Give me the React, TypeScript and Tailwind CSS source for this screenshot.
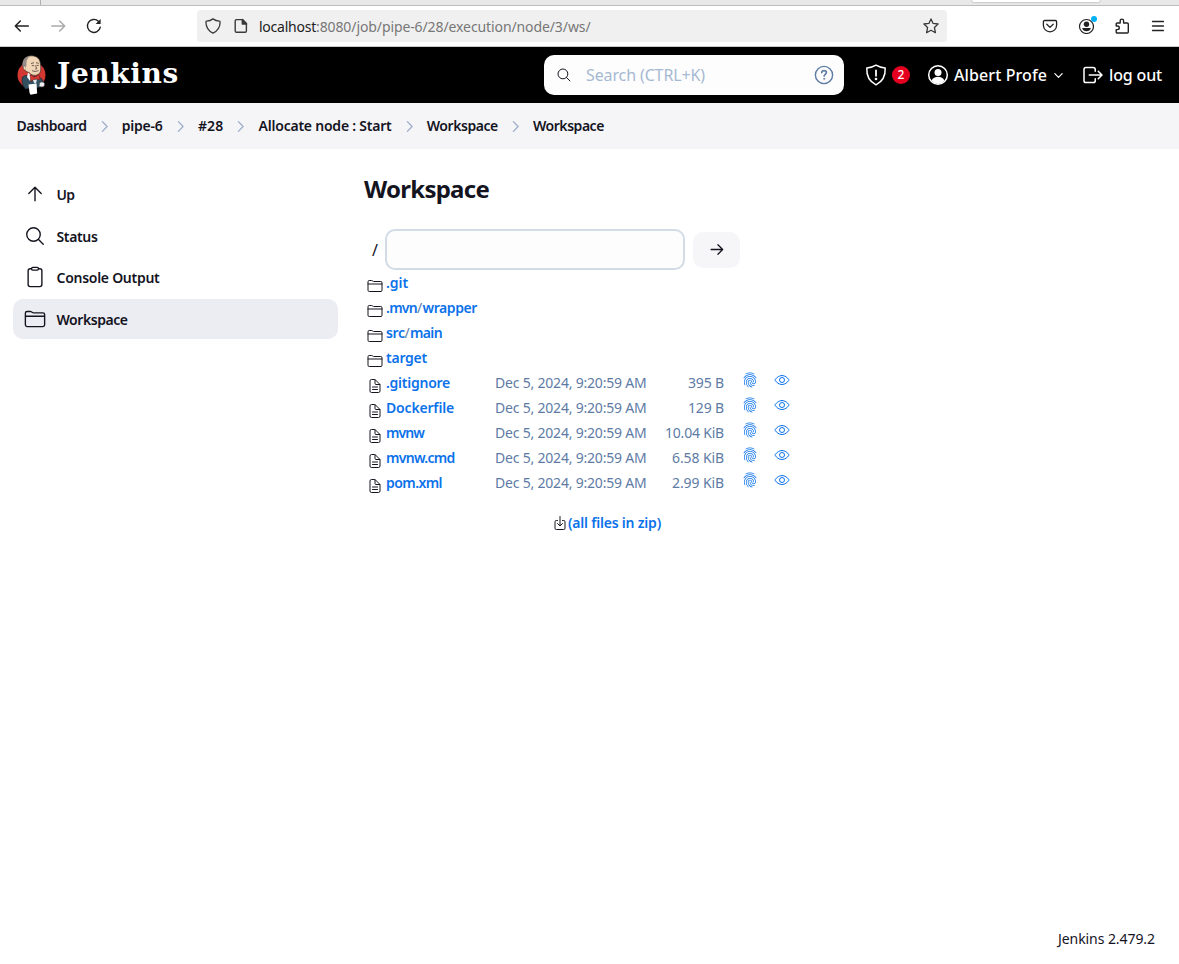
import { useLayoutEffect, useRef, useState } from 'react';
import type { ReactNode } from 'react';
import {
  IoClipboardOutline,
  IoDocumentTextOutline,
  IoDownloadOutline,
  IoEyeOutline,
  IoFingerPrintOutline,
  IoFolderOutline,
  IoSearchOutline,
  IoLogOutOutline,
} from 'react-icons/io5';

/** A single line of text whose letter spacing is adjusted to fill the given width. */
function Fit({ w, children, className = '' }: { w: number; children: string; className?: string }) {
  const ref = useRef<HTMLSpanElement>(null);
  const [spacing, setSpacing] = useState(0);
  useLayoutEffect(() => {
    const el = ref.current;
    if (!el) return;
    const natural = el.getBoundingClientRect().width;
    setSpacing((w - natural) / children.length);
  }, [w, children]);
  return (
    <span ref={ref} className={`inline-block whitespace-pre ${className}`} style={{ letterSpacing: spacing }}>
      {children}
    </span>
  );
}

function Outline({ d, className, strokeWidth = 32 }: { d: string; className: string; strokeWidth?: number }) {
  return (
    <svg className={className} viewBox="0 0 512 512" fill="none" stroke="currentColor" strokeWidth={strokeWidth} strokeLinecap="round" strokeLinejoin="round">
      <path d={d} />
    </svg>
  );
}

function BrowserBar() {
  return (
    <div>
      <div className="flex h-[6px] border-b border-[#bdbdbd] bg-[#e8e8e8]">
        <div className="h-[5px] w-[41px] border-r border-[#b0b0b0]" />
        <div className="ml-[931px] h-[2px] w-[128px] rounded-b bg-white shadow-[0_0_2px_#888]" />
      </div>
      <div className="flex h-[41px] items-center border-b border-[#cccccc] bg-white text-[#222]">
        <svg className="ml-[14px] h-4 w-4" viewBox="0 0 16 16" fill="none" stroke="currentColor" strokeWidth="1.5" strokeLinecap="round" strokeLinejoin="round">
          <path d="M14.300 8H1.700M6.300 3 1.300 8l5 5" />
        </svg>
        <svg className="ml-5 h-4 w-4 text-[#aaa]" viewBox="0 0 16 16" fill="none" stroke="currentColor" strokeWidth="1.5" strokeLinecap="round" strokeLinejoin="round">
          <path d="M1.700 8h12.600M9.700 3l5 5-5 5" />
        </svg>
        <svg className="ml-5 h-4 w-4" viewBox="0 0 16 16" fill="none" stroke="currentColor" strokeWidth="1.4" strokeLinecap="round">
          <path d="M14.300 9.200A6.500 6.500 0 1 1 12.400 3.200" />
          <path d="M14.600 1v5h-5z" fill="currentColor" stroke="none" />
        </svg>
        <div className="ml-[95px] flex h-8 w-[750px] items-center rounded bg-[#f0f0f0]">
          <svg className="ml-2 h-4 w-4 text-[#3a3a3a]" viewBox="0 0 16 16" fill="none" stroke="currentColor" strokeWidth="1.3" strokeLinejoin="round">
            <path d="M8 .9C6.2 2.2 4 3 1.600 3.200 1 3.300.9 3.600.9 4c.1 5 2.400 9 7.100 11.100C12.700 13 15 9 15.100 4c0-.4-.1-.7-.7-.8C12 3 9.800 2.200 8 .900z" />
          </svg>
          <svg className="ml-3 h-4 w-4 text-[#3a3a3a]" viewBox="0 0 16 16" fill="none" stroke="currentColor" strokeWidth="1.4" strokeLinejoin="round">
            <path d="M3.500 1.600H9.500L13.400 5.500V13a1.300 1.300 0 0 1-1.300 1.300H3.500A1.300 1.300 0 0 1 2.200 13V2.900A1.300 1.300 0 0 1 3.500 1.600z" />
            <path d="M9.300 1.600V6h4.300z" fill="currentColor" />
          </svg>
          <div className="mt-px ml-[10px] flex text-[14px] leading-5">
            <Fit w={57} className="text-[#222]">localhost</Fit>
            <Fit w={274.5} className="text-[#777]">:8080/job/pipe-6/28/execution/node/3/ws/</Fit>
          </div>
          <svg className="mr-2 ml-auto h-4 w-4 text-[#3a3a3a]" viewBox="0 0 16 16" fill="none" stroke="currentColor" strokeWidth="1.3" strokeLinejoin="round">
            <path d="M8 .9l2.100 4.500 5 .6-3.700 3.400 1 5.300L8 12.300l-4.400 2.400 1-5.300L.9 6l5-.6z" />
          </svg>
        </div>
        <div className="ml-auto flex items-center gap-5 pr-[13px]">
          <svg className="h-4 w-4" viewBox="0 0 16 16" fill="none" stroke="currentColor" strokeWidth="1.300" strokeLinecap="round" strokeLinejoin="round">
            <path d="M2.600 2.500h10.800a1.200 1.200 0 0 1 1.200 1.200v3.500a6.600 6.600 0 0 1-13.200 0V3.700a1.200 1.200 0 0 1 1.200-1.200zM4.800 6.300 8 9.400l3.200-3.100" />
          </svg>
          <div className="relative">
            <svg className="block h-4 w-4" viewBox="0 0 16 16" fill="none" stroke="currentColor" strokeWidth="1.200">
              <circle cx="8.500" cy="8.500" r="7" />
              <circle cx="8.500" cy="6.300" r="2.700" fill="currentColor" stroke="none" />
              <path d="M4.100 10h8.800c-.4 2-2.200 3.300-4.400 3.300S4.500 12 4.100 10z" fill="currentColor" stroke="none" />
            </svg>
            <span className="absolute -top-[2px] -right-[3px] h-[6px] w-[6px] rounded-full bg-[#00b0f4]" />
          </div>
          <svg className="h-4 w-4" viewBox="0 0 16 16" fill="none" stroke="currentColor" strokeWidth="1.400" strokeLinejoin="round">
            <path d="M6.200 5V2.800a1.700 1.700 0 0 1 3.400 0V5h3.700a1 1 0 0 1 1 1v8a1 1 0 0 1-1 1H3.200a1 1 0 0 1-1-1v-2.400h1.300a1.800 1.800 0 0 0 0-3.600H2.200V6a1 1 0 0 1 1-1z" />
          </svg>
          <svg className="h-4 w-4" viewBox="0 0 16 16" fill="none" stroke="currentColor" strokeWidth="1.300" strokeLinecap="round">
            <path d="M2.500 3.500h11M2.500 8h11M2.500 12.500h11" />
          </svg>
        </div>
      </div>
    </div>
  );
}

function ButlerLogo() {
  return (
    <svg className="h-[40px] w-[30px]" viewBox="0 0 30 40">
      <ellipse cx="14.500" cy="20" rx="14" ry="13.500" fill="#d33833" />
      <path d="M5.500 22c3-2 6-2 9-1l7 1c3 1 5 3 5 7l-3 3-6 1-9 1C6 31 4 27 5.500 22z" fill="#335061" stroke="#16242d" strokeWidth=".7" />
      <path d="M6 12C5 5 8 1.200 14 .8c6-.3 9.500 3.500 9.500 9 .8 5 .2 9-3.500 10.200-3 1-6 0-8-2.500C9 17 7 15 6 12z" fill="#f0d6b7" stroke="#3b2c27" strokeWidth=".7" />
      <path d="M6 13C4.500 6 7 2 13 1 10 3.500 9 6.500 9.500 10l-1 4z" fill="#958d89" />
      <path d="M8 11c-1.500-.5-2 1-1.500 2.500.5 1.400 1.500 1.800 2.500 1.300" fill="#f0d6b7" stroke="#4d3a32" strokeWidth=".5" />
      <path d="M14 8.500l3-.8M19 7.700l2.800.6M14.800 10.600h2.400M19.500 10.400h2.200M18.500 10.500l1.200 3.200-1.500.4M15 15.500c2 1.200 4 1.200 6.500 0" fill="none" stroke="#4d3a32" strokeWidth=".8" />
      <path d="M11 17.500l4 4-2 4.500-3-4z" fill="#f7f7f7" />
      <path d="M13 19.800l4.500 2.200 4.500-2.200 1 5-4.500-.8-4.500 2.300z" fill="#d33833" stroke="#7d1e1b" strokeWidth=".6" />
      <path d="M16 25l4-.500-1 4-2-.5z" fill="#dfe7ec" />
      <path d="M11.500 29.500l8-1 .7 10-6.700 1.200-1-2z" fill="#fff" />
      <path d="M22.500 28.500c1-2 4-1.800 5 0 .4 2-.5 3.500-2.500 3.500l-3-.5z" fill="#eee" stroke="#444" strokeWidth=".6" />
    </svg>
  );
}

function Header() {
  return (
    <header className="flex h-14 items-center bg-black text-white">
      <a className="ml-[17px] flex items-center">
        <ButlerLogo />
        <Fit w={122} className="ml-[10px] pb-[2px] font-['DejaVu_Serif'] text-[28px] leading-9 font-bold">Jenkins</Fit>
      </a>
      <div className="ml-auto flex h-10 w-[300px] items-center rounded-[10px] bg-[#fdfdfd]">
        <IoSearchOutline className="ml-3 h-4 w-4 text-[#14141f]" />
        <Fit w={119} className="ml-[14px] text-[16px] leading-6 text-[#a6b9d2]">Search (CTRL+K)</Fit>
        <svg className="mr-[10px] ml-auto h-5 w-5 text-[#5e7ba5]" viewBox="0 0 20 20" fill="none" stroke="currentColor" strokeWidth="1.400" strokeLinecap="round">
          <circle cx="10" cy="10" r="8.600" />
          <path d="M7.700 7.700c.1-1.400 1.100-2.100 2.300-2.100 1.400 0 2.400.8 2.400 2 0 1.600-2.300 1.800-2.300 3.500" strokeWidth="1.600" />
          <circle cx="10.100" cy="13.800" r=".6" fill="currentColor" strokeWidth=".6" />
        </svg>
      </div>
      <div className="ml-[21px] flex items-center">
        <svg className="h-[22px] w-[22px]" viewBox="0 0 22 22" fill="none" stroke="currentColor" strokeWidth="1.500" strokeLinecap="round" strokeLinejoin="round">
          <path d="M11 1.200C8.300 2.900 5 3.800 1.800 4c-.4 7.500 2.200 13.300 9.200 16.800 7-3.500 9.600-9.300 9.200-16.800C17 3.800 13.700 2.900 11 1.200z" />
          <path d="M11 6.500v5.300" strokeWidth="1.800" />
          <circle cx="11" cy="15" r=".6" fill="currentColor" />
        </svg>
        <span className="ml-[5px] flex h-[18px] w-[18px] items-center justify-center rounded-full bg-[#e6001f] text-[12px] leading-none font-medium">2</span>
      </div>
      <div className="ml-[17px] flex items-center">
        <svg className="h-[22px] w-[22px]" viewBox="0 0 22 22" fill="none">
          <circle cx="11" cy="11" r="9.300" stroke="currentColor" strokeWidth="1.500" />
          <circle cx="11" cy="8.500" r="3.500" fill="currentColor" />
          <path d="M4.600 16.600c1.200-2.600 3.600-3.800 6.400-3.800s5.200 1.200 6.400 3.800c-1.600 2.200-3.800 3.300-6.400 3.300s-4.800-1.100-6.400-3.300z" fill="currentColor" />
        </svg>
        <Fit w={93} className="ml-[5px] text-[16px] leading-6 font-medium">Albert Profe</Fit>
        <Outline d="M112 184l144 144 144-144" strokeWidth={48} className="ml-[5px] h-[13px] w-[13px]" />
      </div>
      <div className="mr-[17px] ml-[16px] flex items-center">
        <IoLogOutOutline className="h-6 w-6" />
        <Fit w={53} className="ml-[4px] text-[16px] leading-6 font-medium">log out</Fit>
      </div>
    </header>
  );
}

const crumbs = [
  { label: 'Dashboard', width: 70 },
  { label: 'pipe-6', width: 41 },
  { label: '#28', width: 25.5 },
  { label: 'Allocate node : Start', width: 133 },
  { label: 'Workspace', width: 71 },
  { label: 'Workspace', width: 71 },
];

function Breadcrumbs() {
  return (
    <nav className="flex h-[46px] items-center bg-[#f5f5f8] pl-[16.500px] text-[14px] leading-5 font-semibold">
      {crumbs.map((c, i) => (
        <div key={i} className="flex items-center">
          {i > 0 && <Outline d="M184 90l160 166-160 166" strokeWidth={48} className="mx-[10.100px] h-[15px] w-[15px] text-[#9fb0ca]" />}
          <Fit w={c.width}>{c.label}</Fit>
        </div>
      ))}
    </nav>
  );
}

function Task({ icon, label, width, active }: { icon: ReactNode; label: string; width: number; active?: boolean }) {
  return (
    <div className={`flex h-10 w-[325px] items-center rounded-[10px] pl-[11px] text-[14px] leading-5 font-semibold ${active ? 'bg-[#ececf3]' : ''}`}>
      <span className="flex h-[22px] w-[22px] items-center justify-center">{icon}</span>
      <Fit w={width} className="mt-[2px] ml-[10.500px]">{label}</Fit>
    </div>
  );
}

const entries = [
  { name: '.git', width: 22 },
  { name: '.mvn/wrapper', width: 91, first: 31 },
  { name: 'src/main', width: 56, first: 18.5 },
  { name: 'target', width: 41 },
  { name: '.gitignore', width: 64, size: '395 B', sizeWidth: 36 },
  { name: 'Dockerfile', width: 68, size: '129 B', sizeWidth: 36 },
  { name: 'mvnw', width: 38, size: '10.04 KiB', sizeWidth: 59 },
  { name: 'mvnw.cmd', width: 68.5, size: '6.58 KiB', sizeWidth: 52 },
  { name: 'pom.xml', width: 56, size: '2.99 KiB', sizeWidth: 52 },
];

function EntryName({ name, width, first = 0 }: { name: string; width: number; first?: number }) {
  const [head, tail] = name.split('/');
  if (!tail) return <Fit w={width} className="font-semibold text-[#0b72ea]">{name}</Fit>;
  return (
    <span className="flex font-semibold text-[#0b72ea]">
      <Fit w={first}>{head}</Fit>
      <Fit w={5.5} className="font-normal text-[#5e7ba5]">/</Fit>
      <Fit w={width - first - 5.5}>{tail}</Fit>
    </span>
  );
}

function FileTable() {
  return (
    <div className="flex flex-col text-[14px] leading-5">
      {entries.map((e) => (
        <div key={e.name} className="flex h-[25px] w-[426px]">
          <span className="flex w-[22px] justify-center pt-[8px] text-[#14141f]">
            {e.size ? <IoDocumentTextOutline className="h-4 w-4" /> : <IoFolderOutline className="h-4 w-4" />}
          </span>
          <span className="w-[109px] pt-[2.500px]">
            <EntryName name={e.name} width={e.width} first={e.first} />
          </span>
          {e.size && (
            <>
              <Fit w={151.5} className="pt-[2.500px] text-[#5e7ba5]">Dec 5, 2024, 9:20:59 AM</Fit>
              <span className="ml-auto pt-[2.500px] text-right text-[#5e7ba5]">
                <Fit w={e.sizeWidth}>{e.size}</Fit>
              </span>
              <IoFingerPrintOutline className="mt-[2px] ml-[18px] h-4 w-4 text-[#0b72ea]" />
              <IoEyeOutline className="mt-[2px] ml-4 h-4 w-4 text-[#0b72ea]" />
            </>
          )}
        </div>
      ))}
    </div>
  );
}

export default function App() {
  return (
    <div className="flex h-[964px] w-[1179px] flex-col overflow-hidden bg-white font-['Noto_Sans',sans-serif] text-[#14141f]">
      <BrowserBar />
      <Header />
      <Breadcrumbs />
      <div className="flex flex-1">
        <aside className="flex flex-col gap-[1.600px] pt-[25px] pl-[13px]">
          <Task icon={<Outline d="M112 244l144-144 144 144M256 120v292" className="h-[22px] w-[22px] shrink-0" />} label="Up" width={18} />
          <Task icon={<IoSearchOutline className="h-[22px] w-[22px] shrink-0" />} label="Status" width={41} />
          <Task icon={<IoClipboardOutline className="h-[22px] w-[22px] shrink-0" />} label="Console Output" width={103} />
          <Task icon={<IoFolderOutline className="h-[22px] w-[22px] shrink-0" />} label="Workspace" width={71} active />
        </aside>
        <main className="ml-[26px] flex flex-col pt-[24px]">
          <h1 className="text-[24px] leading-8 font-bold">
            <Fit w={125}>Workspace</Fit>
          </h1>
          <div className="mt-[24px] flex h-[41px] items-center">
            <span className="ml-[8px] w-[13px] pt-px text-[16px]">/</span>
            <input className="h-[41px] w-[300px] rounded-[10px] border-2 border-[#d3dbe7] bg-[#fdfdfd]" />
            <button className="ml-2 flex h-9 w-[47px] items-center justify-center rounded-[10px] bg-[#f6f6f9]">
              <Outline d="M268 112l144 144-144 144M392 256H64" strokeWidth={38} className="ml-px h-[17px] w-[17px]" />
            </button>
          </div>
          <FileTable />
          <div className="mt-[18px] ml-[188px] flex items-center text-[14px] leading-5 font-semibold">
            <IoDownloadOutline className="h-4 w-4" />
            <Fit w={93} className="text-[#0b72ea]">(all files in zip)</Fit>
          </div>
        </main>
      </div>
      <footer className="flex justify-end pr-6 pb-[15px] text-[14px] leading-5">
        <Fit w={97}>Jenkins 2.479.2</Fit>
      </footer>
    </div>
  );
}
